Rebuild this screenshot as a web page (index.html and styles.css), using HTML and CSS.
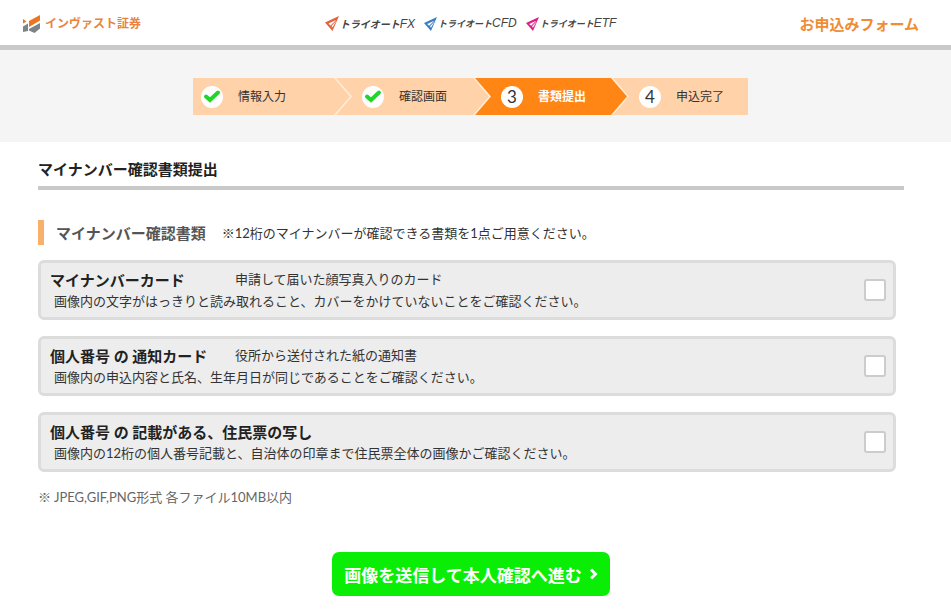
FILE: index.html
```html
<!DOCTYPE html>
<html lang="ja">
  <head>
    <meta charset="utf-8" />
    <meta name="viewport" content="width=device-width, initial-scale=1" />
    <title>お申込みフォーム</title>
    <link rel="stylesheet" href="styles.css">
  </head>
  <body>
    <header class="site-header">
      <a class="brand" href="#">
        <svg width="19" height="18" viewBox="0 0 19 18" aria-hidden="true">
          <path fill="#ee7420" d="M1 4L4.500 6.500 1 8.500zM7 6L18 0V5.500L7 12z" />
          <path fill="#7d8487" d="M1 11.500L6 8.500V16L1 17zM7 14L18 8V13.500L12.500 18 7 15.500z" />
        </svg>
        <span>インヴァスト証券</span>
      </a>
      <nav class="products">
        <a class="product fx" href="#">
          <svg width="14" height="15" viewBox="0 0 14 15" aria-hidden="true">
            <path fill="currentColor" fill-rule="evenodd" d="M14 0L0 6.500 7.500 15zM11 4L3.500 7.500 5.500 9.500zM11.500 4.500L6.500 10 7.500 11.500z" />
          </svg>
          <span class="product-name">トライオート<span class="latin">FX</span></span>
        </a>
        <a class="product cfd" href="#">
          <svg width="13" height="14" viewBox="0 0 14 15" aria-hidden="true">
            <path fill="currentColor" fill-rule="evenodd" d="M14 0L0 6.500 7.500 15zM11 4L3.500 7.500 5.500 9.500zM11.500 4.500L6.500 10 7.500 11.500z" />
          </svg>
          <span class="product-name">トライオート<span class="latin">CFD</span></span>
        </a>
        <a class="product etf" href="#">
          <svg width="13" height="14" viewBox="0 0 14 15" aria-hidden="true">
            <path fill="currentColor" fill-rule="evenodd" d="M14 0L0 6.500 7.500 15zM11 4L3.500 7.500 5.500 9.500zM11.500 4.500L6.500 10 7.500 11.500z" />
          </svg>
          <span class="product-name">トライオート<span class="latin">ETF</span></span>
        </a>
      </nav>
      <div class="form-name">お申込みフォーム</div>
    </header>

    <div class="progress">
      <ol class="steps">
        <li class="step">
          <span class="mark">
            <svg width="18" height="15" viewBox="0 0 18 15" aria-hidden="true">
              <path fill="none" stroke="#22d52a" stroke-width="4" stroke-linecap="round" d="M3 7.500L7 11 15 3.500" />
            </svg>
          </span>
          <span>情報入力</span>
        </li>
        <li class="step">
          <span class="mark">
            <svg width="18" height="15" viewBox="0 0 18 15" aria-hidden="true">
              <path fill="none" stroke="#22d52a" stroke-width="4" stroke-linecap="round" d="M3 7.500L7 11 15 3.500" />
            </svg>
          </span>
          <span>確認画面</span>
        </li>
        <li class="step current" aria-current="step">
          <span class="mark">3</span>
          <span>書類提出</span>
        </li>
        <li class="step">
          <span class="mark">4</span>
          <span>申込完了</span>
        </li>
      </ol>
    </div>

    <main class="content">
      <h1>マイナンバー確認書類提出</h1>

      <form>
        <div class="section-title">
          <h2>マイナンバー確認書類</h2>
          <p>※12桁のマイナンバーが確認できる書類を1点ご用意ください。</p>
        </div>

        <div class="documents">
          <label class="document">
            <span class="document-text">
              <span class="document-head">
                <b>マイナンバーカード</b>
                <span>申請して届いた顔写真入りのカード</span>
              </span>
              <span class="document-note">画像内の文字がはっきりと読み取れること、カバーをかけていないことをご確認ください。</span>
            </span>
            <input type="checkbox" name="document" value="card" />
          </label>
          <label class="document">
            <span class="document-text">
              <span class="document-head">
                <b>個人番号 の 通知カード</b>
                <span>役所から送付された紙の通知書</span>
              </span>
              <span class="document-note">画像内の申込内容と氏名、生年月日が同じであることをご確認ください。</span>
            </span>
            <input type="checkbox" name="document" value="notice" />
          </label>
          <label class="document">
            <span class="document-text">
              <span class="document-head">
                <b>個人番号 の 記載がある、住民票の写し</b>
              </span>
              <span class="document-note">画像内の12桁の個人番号記載と、自治体の印章まで住民票全体の画像かご確認ください。</span>
            </span>
            <input type="checkbox" name="document" value="resident" />
          </label>
        </div>

        <p class="file-note">※ JPEG,GIF,PNG形式 各ファイル10MB以内</p>

        <button class="btn-submit" type="button">
          <span>画像を送信して本人確認へ進む</span>
          <svg width="8" height="12" viewBox="0 0 8 12" aria-hidden="true">
            <path fill="none" stroke="#fff" stroke-width="3" d="M1 1.500L5.500 6 1 10.500" />
          </svg>
        </button>
      </form>
    </main>
  </body>
</html>
```
FILE: styles.css
```css
/* Reset */
* {
  box-sizing: border-box;
}
body, h1, h2, p, ol {
  margin: 0;
  padding: 0;
}
body {
  font-family: Lato, "Noto Sans CJK JP", sans-serif;
  font-size: 13px;
  line-height: 20px;
  color: #333;
  background: #fff;
}
a {
  color: inherit;
  text-decoration: none;
}

/* Header */
.site-header {
  display: grid;
  grid-template-columns: 1fr auto 1fr;
  align-items: center;
  height: 50px;
  padding: 2px 32px 0 22px;
  border-bottom: 5px solid #c9c9c9;
}
.brand {
  display: flex;
  align-items: center;
  gap: 4px;
  font-size: 12px;
  font-weight: bold;
  color: #e8843c;
}
.products {
  display: flex;
  gap: 9px;
}
.product {
  display: flex;
  align-items: center;
  gap: 1px;
}
.product-name {
  font-size: 9px;
  font-weight: bold;
  font-style: italic;
  color: #444;
}
.fx .product-name {
  font-size: 10px;
}
.product-name .latin {
  font-family: "Liberation Sans", sans-serif;
  font-size: 12px;
  font-weight: normal;
}
.fx {
  color: #e2633c;
}
.cfd {
  color: #3a7fc4;
}
.etf {
  color: #dd1f86;
}
.form-name {
  justify-self: end;
  font-size: 15px;
  font-weight: bold;
  color: #ee8d34;
}

/* Progress */
.progress {
  padding: 28px 20px 27px 10px;
  background: #f5f5f5;
}
.steps {
  display: grid;
  grid-template-columns: 141fr 139fr 138fr 137fr;
  max-width: 555px;
  margin: 0 auto;
  list-style: none;
}
.step {
  position: relative;
  display: flex;
  align-items: center;
  gap: 15px;
  height: 37px;
  padding-left: 28px;
  font-size: 12px;
  background: #ffd2a9;
}
.step:first-child {
  padding-left: 8px;
}
/* arrow tip lying over the next step, with a pale edge behind it */
.step:not(:last-child)::before,
.step:not(:last-child)::after {
  content: "";
  position: absolute;
  z-index: 1;
  top: 0;
  left: 100%;
  width: 16px;
  height: 100%;
  background: #ffd2a9;
  clip-path: polygon(0 0, 100% 50%, 0 100%);
}
.step:not(:last-child)::before {
  width: 18px;
  background: #ffeed8;
  clip-path: polygon(0 0, 2px 0, 100% 50%, 2px 100%, 0 100%);
}
.step.current {
  font-weight: bold;
  color: #fff;
  background: #ff8614;
}
.step.current:not(:last-child)::after {
  background: #ff8614;
}
.mark {
  display: flex;
  align-items: center;
  justify-content: center;
  width: 22px;
  height: 22px;
  border-radius: 50%;
  font-size: 17px;
  font-weight: normal;
  color: #333;
  background: #fff;
}

/* Content */
.content {
  padding: 15px 47px 12px 38px;
}
h1 {
  padding-bottom: 5px;
  border-bottom: 4px solid #c9c9c9;
  font-size: 15px;
  line-height: 24px;
  color: #222;
}
.section-title {
  display: flex;
  align-items: center;
  gap: 16px;
  min-height: 25px;
  margin: 30px 0 15px;
  padding-left: 12px;
  border-left: 6px solid #f8b06a;
}
h2 {
  font-size: 15px;
  color: #555;
}
.documents {
  display: grid;
  gap: 16px;
  margin-right: 8px;
}
.document {
  display: flex;
  align-items: center;
  justify-content: space-between;
  padding: 6px 7px 6px 9px;
  border: 3px solid #dcdcdc;
  border-radius: 6px;
  background: #ededed;
  cursor: pointer;
}
.document-head {
  display: flex;
  gap: 16px;
  line-height: 20px;
}
.document-head b {
  min-width: 169px;
  font-size: 15px;
  line-height: 22px;
  color: #222;
}
.document-note {
  display: block;
  padding-left: 4px;
}
input[type="checkbox"] {
  flex: none;
  appearance: none;
  width: 22px;
  height: 22px;
  margin: 0;
  border: 2px solid #ccc;
  border-radius: 3px;
  background: #fff;
  cursor: pointer;
}
input[type="checkbox"]:checked {
  background: #22d52a;
}
.file-note {
  margin-top: 15px;
  color: #666;
}
.btn-submit {
  display: flex;
  align-items: center;
  gap: 8px;
  height: 44px;
  margin: 45px auto 0;
  padding: 0 12px;
  border: 0;
  border-radius: 7px;
  font-family: inherit;
  font-size: 17px;
  font-weight: bold;
  color: #fff;
  background: #0aee05;
  cursor: pointer;
}
```
